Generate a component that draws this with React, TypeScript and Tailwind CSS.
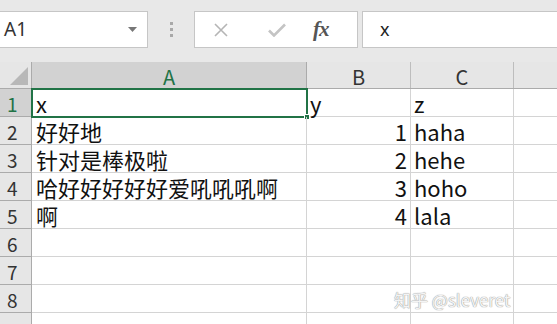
import React from "react"

const rows: [string, string, string][] = [
  ["x", "y", "z"],
  ["好好地", "1", "haha"],
  ["针对是棒极啦", "2", "hehe"],
  ["哈好好好好好爱吼吼吼啊", "3", "hoho"],
  ["啊", "4", "lala"],
  ["", "", ""],
  ["", "", ""],
  ["", "", ""],
  ["", "", ""],
]

const cellFont = { fontFamily: '"Noto Sans CJK SC", "Noto Sans", sans-serif' }

export default function App() {
  return (
    <div className="relative w-[557px] h-[324px] overflow-hidden bg-white" style={cellFont}>
      {/* 编辑栏 */}
      <div className="h-[62px] bg-[#e8e8e8] flex items-start pt-[11px]">
        <div className="w-[148px] h-[37px] bg-white border-y border-r border-[#c6c6c6] flex items-center justify-between pl-[4px] pr-[10px]">
          <span className="text-[19px] text-[#333]" style={{ fontFamily: '"Noto Sans", sans-serif' }}>A1</span>
          <svg width="9" height="5" viewBox="0 0 9 5"><path d="M0 0h9L4.5 5z" fill="#777" /></svg>
        </div>
        <div className="w-[46px] h-[37px] flex flex-col items-center justify-center gap-[3px] pl-[1px]">
          <div className="w-[3px] h-[3px] bg-[#a8a8a8]" />
          <div className="w-[3px] h-[3px] bg-[#a8a8a8]" />
          <div className="w-[3px] h-[3px] bg-[#a8a8a8]" />
        </div>
        <div className="w-[164px] h-[37px] bg-white border border-[#c6c6c6] flex items-center">
          <svg className="ml-[19px]" width="14" height="14" viewBox="0 0 14 14">
            <path d="M1 1l12 12M13 1L1 13" stroke="#b5b5b5" strokeWidth="1.6" />
          </svg>
          <svg className="ml-[40px]" width="18" height="14" viewBox="0 0 18 14">
            <path d="M1 7.5l5 5L17 1.5" stroke="#c4c4c4" strokeWidth="2.6" fill="none" />
          </svg>
          <span className="ml-[27px] text-[21px] italic font-bold text-[#555] tracking-[-1px]" style={{ fontFamily: '"Liberation Serif", serif' }}>fx</span>
        </div>
        <div className="ml-[4px] flex-1 h-[37px] bg-white border-y border-l border-[#c6c6c6] flex items-center pl-[17px]">
          <span className="text-[18px] text-[#222]" style={{ fontFamily: '"Noto Sans", sans-serif' }}>x</span>
        </div>
      </div>

      {/* 列标题 */}
      <div className="flex h-[27px] bg-[#e6e6e6] border-b border-[#ababab] text-[20px] leading-none">
        <div className="w-[32px] border-r border-[#ababab] flex items-end justify-end p-[3px]">
          <svg width="18" height="18" viewBox="0 0 18 18"><path d="M18 0V18H0z" fill="#b8b8b8" /></svg>
        </div>
        <div className="w-[275px] bg-[#d2d2d2] border-r border-[#ababab] flex items-center justify-center pt-[3px] text-[#217346]">A</div>
        <div className="w-[104px] border-r border-[#bdbdbd] flex items-center justify-center pt-[3px] text-[#333]">B</div>
        <div className="w-[103px] border-r border-[#bdbdbd] flex items-center justify-center pt-[3px] text-[#333]">C</div>
        <div className="flex-1" />
      </div>

      {/* 单元格 */}
      {rows.map((r, i) => (
        <div key={i} className="flex h-[28px] text-[22px] leading-none">
          <div
            className={`w-[32px] border-r border-b border-[#ababab] flex items-end pl-[7px] pb-[3px] text-[19px] ${
              i === 0 ? "bg-[#d2d2d2] text-[#217346]" : "bg-[#e6e6e6] text-[#333]"
            }`}
          >
            {i < 8 ? i + 1 : ""}
          </div>
          <div className="relative w-[275px] border-r border-b border-[#d4d4d4] flex items-end pl-[4px] pb-[2px] text-[#111] whitespace-nowrap">
            {r[0]}
            {i === 0 && (
              <div className="absolute left-[-1px] top-[-1px] w-[277px] h-[30px] border-2 border-[#217346]">
                <div className="absolute right-[-4px] bottom-[-4px] w-[6px] h-[6px] bg-[#217346] border border-white" />
              </div>
            )}
          </div>
          <div
            className={`w-[104px] border-r border-b border-[#d4d4d4] flex items-end pb-[2px] text-[#111] ${
              i === 0 ? "justify-start pl-[3px]" : "justify-end pr-[3px]"
            }`}
          >
            {r[1]}
          </div>
          <div className="w-[103px] border-r border-b border-[#d4d4d4] flex items-end pl-[3px] pb-[2px] text-[#111]">{r[2]}</div>
          <div className="flex-1 border-b border-[#d4d4d4]" />
        </div>
      ))}

      {/* 水印 */}
      <div
        className="absolute left-[394px] top-[287px] text-[17px] text-[#f4f4f4]"
        style={{ textShadow: "0 0 1px #9a9a9a, 0 0 1px #9a9a9a" }}
      >
        知乎 @sleveret
      </div>
    </div>
  )
}
